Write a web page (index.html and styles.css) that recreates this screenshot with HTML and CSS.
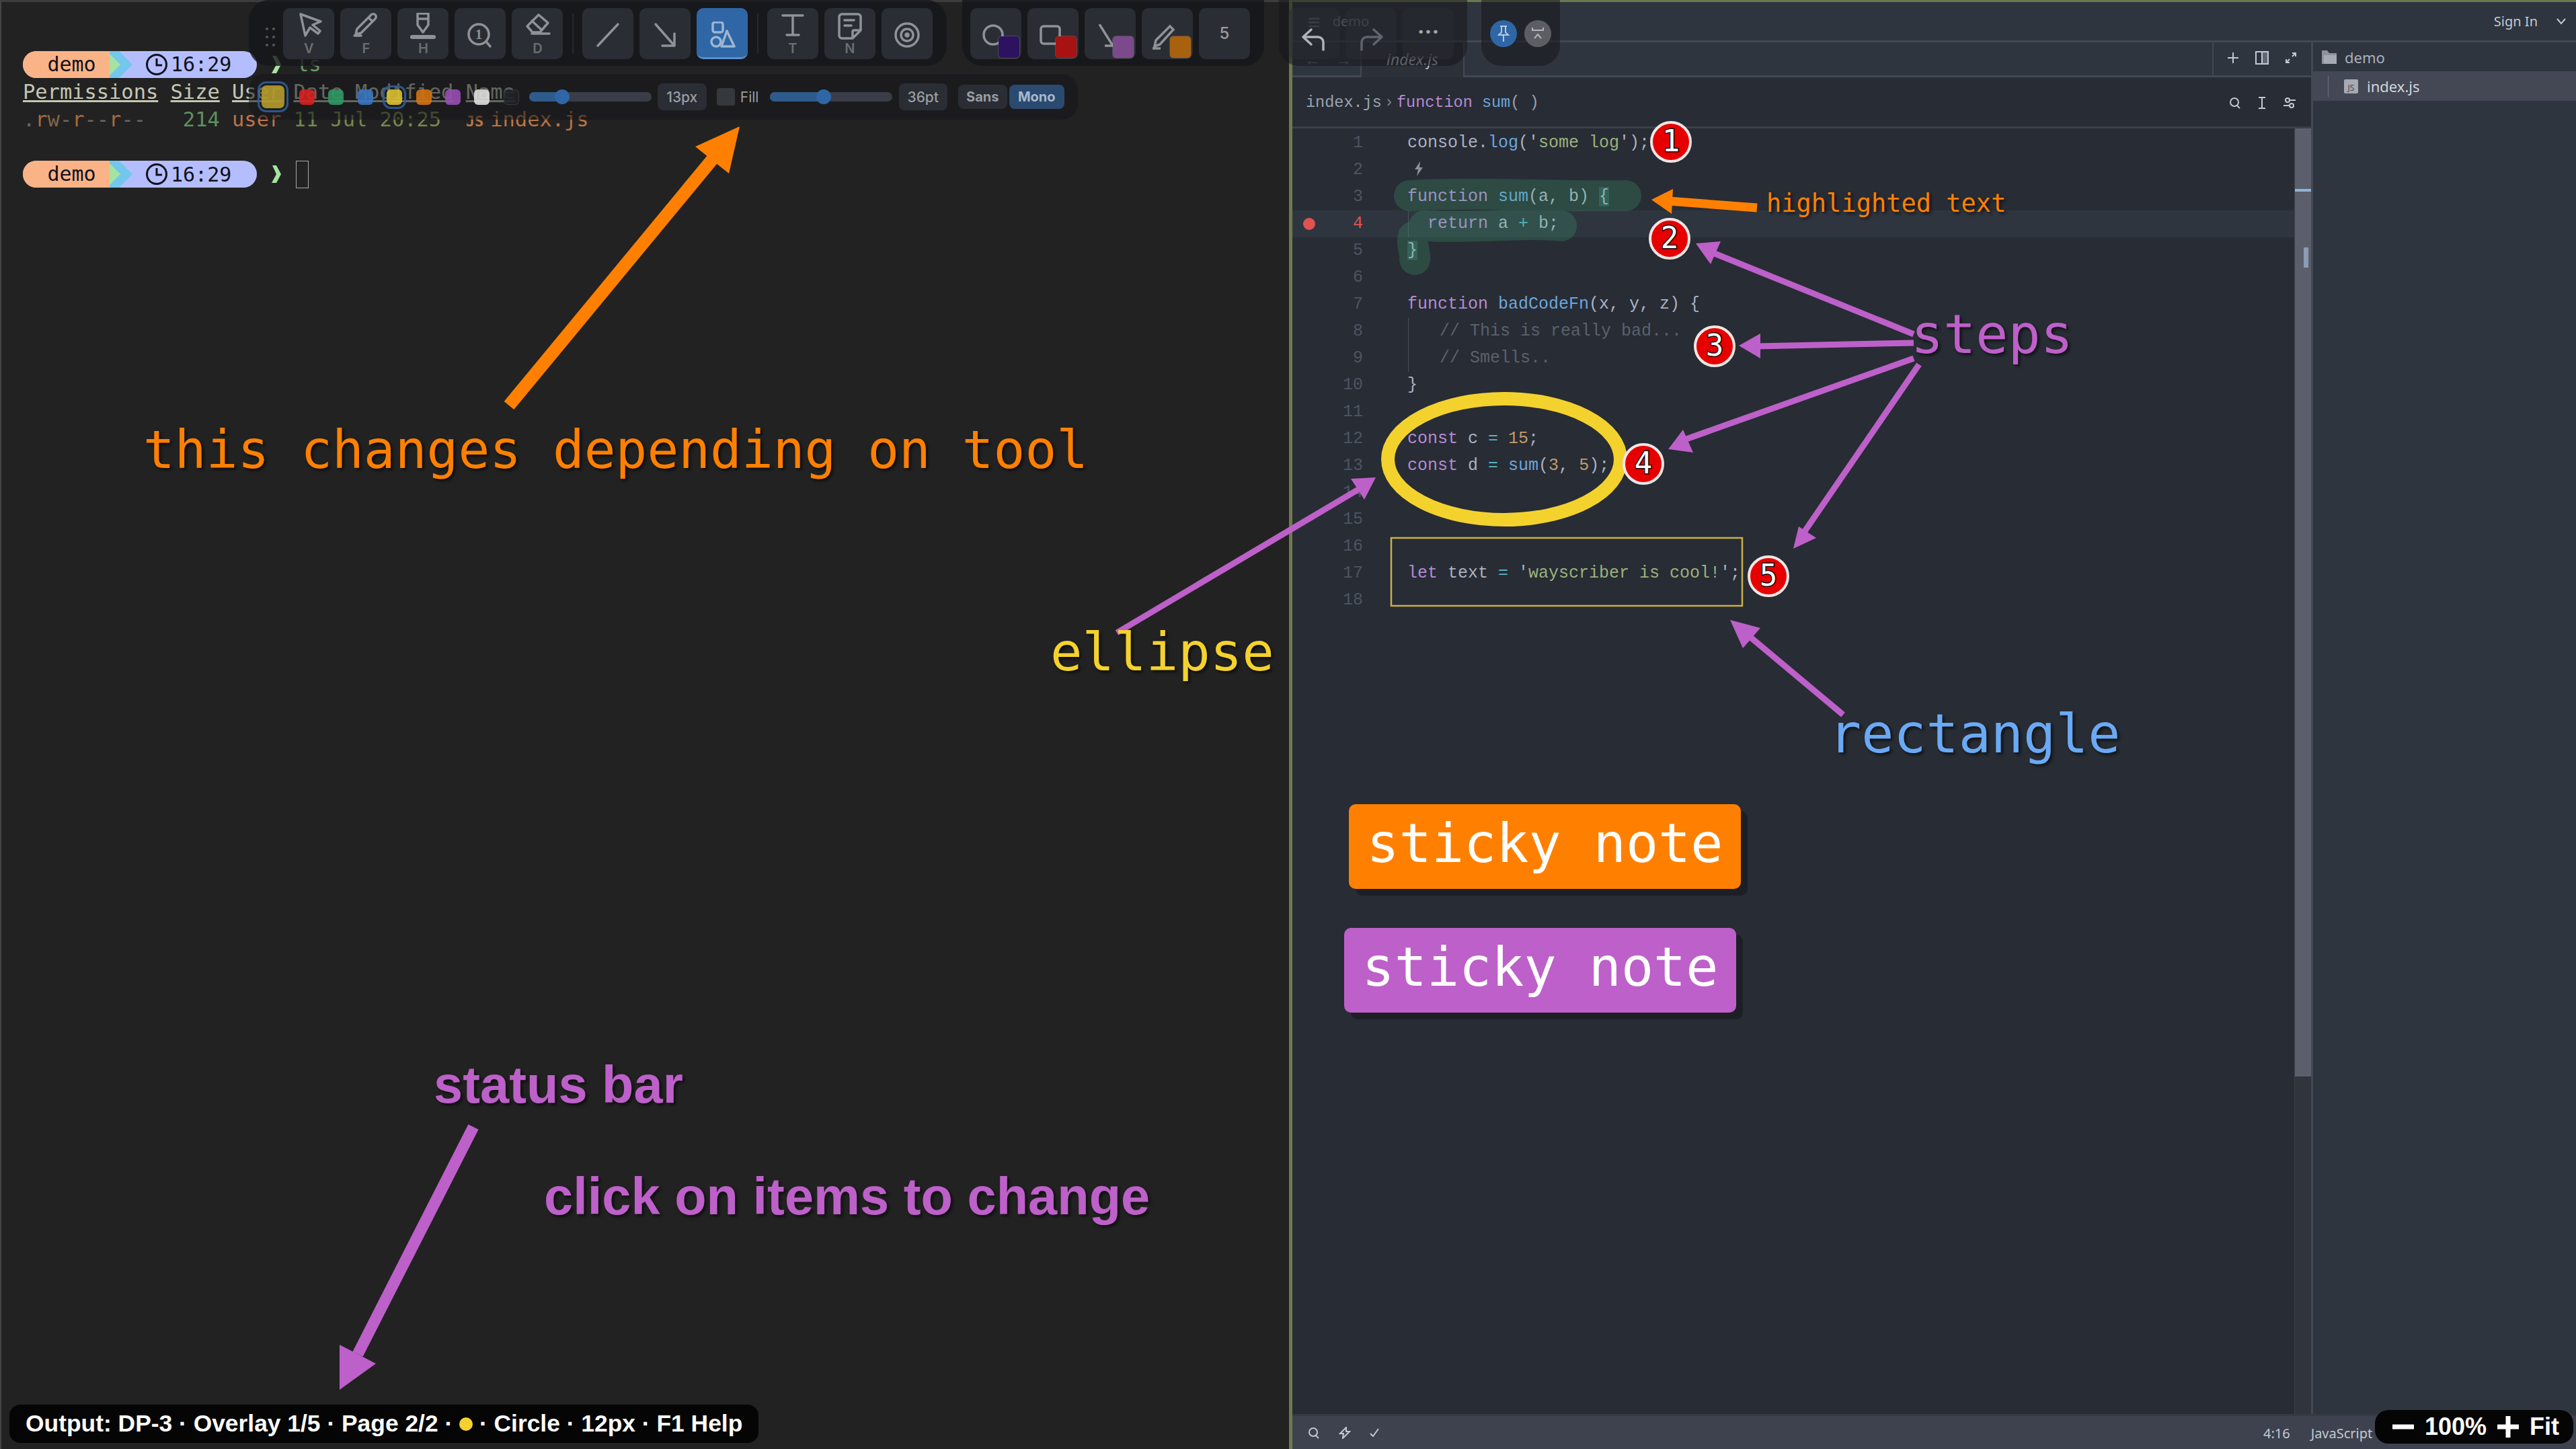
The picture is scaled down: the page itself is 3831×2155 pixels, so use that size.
FILE: index.html

```html
<!DOCTYPE html>
<html lang="en">
<head>
    <meta charset="UTF-8">
    <title>wayscriber demo</title>
    <link rel="stylesheet" href="styles.css">
</head>
<body>
    <div class="screen">
        <!-- terminal window -->
        <div class="terminal">
            <div class="term-row">
                <div class="prompt">
                    <span class="prompt-dir">demo</span>
                    <svg class="prompt-sep" width="34" height="40" viewBox="0 0 34 40"><polygon fill="#74c7ec" points="0,0 14,0 34,20 14,40 0,40"/><polygon fill="#a6e3a1" points="0,4 16,20 0,36"/></svg>
                    <span class="prompt-time"><svg width="32" height="34" viewBox="0 0 32 34" fill="none" stroke="#11111b" stroke-width="3"><circle cx="16" cy="17" r="14.5"/><path d="M16 8v10h8"/></svg>16:29</span>
                </div>
                <svg class="prompt-arrow" width="14" height="26" viewBox="0 0 14 26"><polygon fill="#a6e3a1" points="1,0 7,0 14,13 7,26 0,26 7,13"/></svg><span class="cmd">ls</span>
            </div>
            <div class="term-row term-head"><u>Permissions</u> <u>Size</u> <u>User</u> <u>Date Modified</u> <u>Name</u></div>
            <div class="term-row term-file"><span class="dim">.</span><span class="perm-r">r</span><span class="perm-w">w</span><span class="dim">-</span><span class="perm-r">r</span><span class="dim">--</span><span class="perm-r">r</span><span class="dim">--</span>   <span class="fsize">214</span> <span class="fuser">user</span> <span class="fdate">11 Jul 20:25</span>  <span class="js-glyph">JS</span><span class="fuser">index.js</span></div>
            <div class="term-row"></div>
            <div class="term-row">
                <div class="prompt">
                    <span class="prompt-dir">demo</span>
                    <svg class="prompt-sep" width="34" height="40" viewBox="0 0 34 40"><polygon fill="#74c7ec" points="0,0 14,0 34,20 14,40 0,40"/><polygon fill="#a6e3a1" points="0,4 16,20 0,36"/></svg>
                    <span class="prompt-time"><svg width="32" height="34" viewBox="0 0 32 34" fill="none" stroke="#11111b" stroke-width="3"><circle cx="16" cy="17" r="14.5"/><path d="M16 8v10h8"/></svg>16:29</span>
                </div>
                <svg class="prompt-arrow" width="14" height="26" viewBox="0 0 14 26"><polygon fill="#a6e3a1" points="1,0 7,0 14,13 7,26 0,26 7,13"/></svg><span class="term-cursor"></span>
            </div>
        </div>

        <!-- editor window -->
        <div class="editor">
            <div class="titlebar">
                <span class="menu-icon">≡</span>
                <span class="title-name">demo</span>
                <span class="sign-in">Sign In</span>
                <svg class="chev" width="14" height="10" viewBox="0 0 14 10" fill="none" stroke="#c3c9d4" stroke-width="2"><path d="M1 1l6 7 6-7"/></svg>
            </div>
            <div class="workspace">
                <div class="main-col">
                    <div class="tabs">
                        <div class="tab-nav"><span>←</span><span>→</span></div>
                        <div class="tab-active">index.js</div>
                        <div class="tab-fill"></div>
                        <div class="tab-actions">
                            <svg width="18" height="18" viewBox="0 0 18 18" stroke="#c3c9d4" stroke-width="2"><path d="M9 1v16M1 9h16"/></svg>
                            <svg width="20" height="20" viewBox="0 0 20 20" fill="none" stroke="#c3c9d4" stroke-width="2"><rect x="1" y="1" width="18" height="18"/><path d="M10 1v18"/><rect x="11" y="2" width="7" height="16" fill="#c3c9d4" stroke="none" opacity=".35"/></svg>
                            <svg width="18" height="18" viewBox="0 0 18 18" fill="none" stroke="#c3c9d4" stroke-width="2"><path d="M2 16l5-5M11 7l5-5M11 2h5v5M2 11v5h5"/></svg>
                        </div>
                    </div>
                    <div class="crumbs">
                        <span>index.js</span><span class="crumb-sep">›</span><span class="kw">function</span>&nbsp;<span class="fn">sum</span>(&nbsp;)
                        <div class="crumb-icons">
                            <svg width="18" height="18" viewBox="0 0 18 18" fill="none" stroke="#c3c9d4" stroke-width="2"><circle cx="8" cy="8" r="6"/><path d="M12 13l4 4"/></svg>
                            <svg width="14" height="18" viewBox="0 0 14 18" fill="none" stroke="#c3c9d4" stroke-width="2"><path d="M2 1h10M2 17h10M7 1v16"/></svg>
                            <svg width="20" height="18" viewBox="0 0 20 18" fill="none" stroke="#c3c9d4" stroke-width="2"><circle cx="7" cy="5" r="3"/><circle cx="13" cy="13" r="3"/><path d="M10 5h9M1 13h9"/></svg>
                        </div>
                    </div>
                    <div class="pane">
                        <div class="code">
                            <div class="line"><span class="num">1</span><span class="src">console.<span class="fn">log</span>('<span class="str">some log</span>');</span></div>
                            <div class="line"><span class="num">2</span><span class="src"><svg class="bolt" width="16" height="22" viewBox="0 0 16 22"><path fill="#8b909a" d="M10 0L2 12h5l-2 10 9-13H9z"/></svg></span></div>
                            <div class="line"><span class="num">3</span><span class="src"><span class="kw">function</span> <span class="fn">sum</span>(a, b) <span class="match">{</span></span></div>
                            <div class="line line-active"><span class="breakpoint"></span><span class="num">4</span><span class="src guide"><span class="ind2"></span><span class="kw">return</span> a <span class="op">+</span> b;</span></div>
                            <div class="line"><span class="num">5</span><span class="src"><span class="match">}</span></span></div>
                            <div class="line"><span class="num">6</span><span class="src"></span></div>
                            <div class="line"><span class="num">7</span><span class="src"><span class="kw">function</span> <span class="fn">badCodeFn</span>(x, y, z) {</span></div>
                            <div class="line"><span class="num">8</span><span class="src guide"><span class="ind3"></span><span class="comment">// This is really bad...</span></span></div>
                            <div class="line"><span class="num">9</span><span class="src guide"><span class="ind3"></span><span class="comment">// Smells..</span></span></div>
                            <div class="line"><span class="num">10</span><span class="src">}</span></div>
                            <div class="line"><span class="num">11</span><span class="src"></span></div>
                            <div class="line"><span class="num">12</span><span class="src"><span class="kw">const</span> c <span class="op">=</span> <span class="lit">15</span>;</span></div>
                            <div class="line"><span class="num">13</span><span class="src"><span class="kw">const</span> d <span class="op">=</span> <span class="fn">sum</span>(<span class="lit">3</span>, <span class="lit">5</span>);</span></div>
                            <div class="line"><span class="num">14</span><span class="src"></span></div>
                            <div class="line"><span class="num">15</span><span class="src"></span></div>
                            <div class="line"><span class="num">16</span><span class="src"></span></div>
                            <div class="line"><span class="num">17</span><span class="src"><span class="kw">let</span> text <span class="op">=</span> '<span class="str">wayscriber is cool!</span>';</span></div>
                            <div class="line"><span class="num">18</span><span class="src"></span></div>
                        </div>
                        <div class="scroll">
                            <div class="scroll-thumb"><span class="scroll-mark"></span><span class="scroll-pos"></span></div>
                        </div>
                    </div>
                </div>
                <div class="sidebar">
                    <div class="tree-root">
                        <svg width="24" height="20" viewBox="0 0 24 20"><path fill="#8d929c" d="M1 0h8l3 4h11v16H1z"/><path fill="#a5aab3" d="M4 7h19v13H4z"/></svg>
                        demo
                    </div>
                    <div class="tree-file">
                        <span class="tree-guide"></span>
                        <span class="js-icon">JS</span>
                        index.js
                    </div>
                </div>
            </div>
            <div class="statusbar">
                <svg width="18" height="18" viewBox="0 0 18 18" fill="none" stroke="#c3c9d4" stroke-width="2"><circle cx="8" cy="8" r="6"/><path d="M12 13l4 4"/></svg>
                <svg width="18" height="18" viewBox="0 0 18 18" fill="none" stroke="#c3c9d4" stroke-width="2"><path d="M11 1L2 10h5l-1 7 10-10h-5z"/></svg>
                <svg width="14" height="14" viewBox="0 0 14 14" fill="none" stroke="#c3c9d4" stroke-width="2"><path d="M1 8l4 4 8-11"/></svg>
                <span class="status-pos">4:16</span>
                <span class="status-lang">JavaScript</span>
            </div>
        </div>

        <!-- overlay: drawn shapes -->
        <svg class="canvas" width="3831" height="2155" viewBox="0 0 3831 2155">
            <g opacity=".22" fill="none" stroke="#3fb47c" stroke-linecap="round" stroke-linejoin="round" stroke-width="46">
                <path d="M2096 291C2200 285 2320 293 2418 291M2118 336C2200 340 2270 330 2322 336M2102 352C2098 365 2106 375 2104 386"/>
            </g>
            <ellipse cx="2237" cy="683" rx="173" ry="90" fill="none" stroke="#f4d22e" stroke-width="20"/>
            <rect x="2069" y="800" width="522" height="101" fill="none" stroke="#c9b04a" stroke-width="2.5"/>

            <g stroke="#ff8000" fill="#ff8000">
                <line x1="757" y1="603" x2="1066" y2="229" stroke-width="19"/>
                <polygon stroke="none" points="1100,188 1034,218 1084,258"/>
                <line x1="2613" y1="309" x2="2482" y2="299" stroke-width="13"/>
                <polygon stroke="none" points="2456,297 2488,281 2486,318"/>
            </g>
            <g stroke="#bd60c9" fill="#bd60c9">
                <line x1="2846" y1="497" x2="2545" y2="375" stroke-width="9"/>
                <polygon stroke="none" points="2522,362 2559,359 2544,393"/>
                <line x1="2846" y1="510" x2="2612" y2="515" stroke-width="9"/>
                <polygon stroke="none" points="2586,514 2618,496 2618,533"/>
                <line x1="2846" y1="533" x2="2505" y2="654" stroke-width="9"/>
                <polygon stroke="none" points="2481,668 2503,639 2518,673"/>
                <line x1="2854" y1="542" x2="2684" y2="790" stroke-width="9"/>
                <polygon stroke="none" points="2667,816 2675,783 2701,800"/>
                <line x1="2741" y1="1063" x2="2600" y2="945" stroke-width="9"/>
                <polygon stroke="none" points="2573,922 2618,934 2592,964"/>
                <line x1="1661" y1="941" x2="2025" y2="725" stroke-width="9"/>
                <polygon stroke="none" points="2046,710 2009,712 2029,743"/>
                <line x1="704" y1="1676" x2="532" y2="2014" stroke-width="17"/>
                <polygon stroke="none" points="505,2067 505,2000 559,2028"/>
            </g>
        </svg>

        <!-- overlay: labels -->
        <div class="label label-tool">this changes depending on tool</div>
        <div class="label label-high">highlighted text</div>
        <div class="label label-steps">steps</div>
        <div class="label label-ellipse">ellipse</div>
        <div class="label label-rect">rectangle</div>
        <div class="label-sans label-status">status bar</div>
        <div class="label-sans label-click">click on items to change</div>
        <div class="sticky sticky-orange">sticky note</div>
        <div class="sticky sticky-purple">sticky note</div>
        <div class="badge badge-1">1</div>
        <div class="badge badge-2">2</div>
        <div class="badge badge-3">3</div>
        <div class="badge badge-4">4</div>
        <div class="badge badge-5">5</div>

        <!-- overlay: tool palette -->
        <div class="palette">
            <div class="group group-tools">
                <div class="drag"><i></i><i></i><i></i><i></i><i></i><i></i></div>
                <div class="tool">
                    <svg class="ico" viewBox="0 0 40 40"><path d="M8 2l7 32 7-12 12 9 3-4-11-9 12-5z"/></svg><span>V</span>
                </div>
                <div class="tool">
                    <svg class="ico" viewBox="0 0 40 40"><path d="M28 3a4 4 0 0 1 6 6L13 30l-8 2 2-8zM24 7l6 6M3 34h10"/></svg><span>F</span>
                </div>
                <div class="tool">
                    <svg class="ico" viewBox="0 0 40 40"><path d="M12 1h16v17l-8 11-8-11zM12 9h16"/><path stroke-width="6" d="M4 36h32"/></svg><span>H</span>
                </div>
                <div class="tool">
                    <svg class="ico ico-step" viewBox="0 0 40 40"><circle cx="18" cy="19" r="15"/><path d="M29 30l6 7"/><text x="18" y="26" text-anchor="middle">1</text></svg>
                </div>
                <div class="tool">
                    <svg class="ico" viewBox="0 0 40 40"><path d="M22 3l14 12-12 14H13L5 20zM12 12l14 13M12 31h26"/></svg><span>D</span>
                </div>
                <div class="divider"></div>
                <div class="tool">
                    <svg class="ico ico-c" viewBox="0 0 40 40"><path d="M5 36L35 4"/></svg>
                </div>
                <div class="tool">
                    <svg class="ico ico-c" viewBox="0 0 40 40"><path d="M6 4l28 32M34 18v18H16"/></svg>
                </div>
                <div class="tool tool-on">
                    <svg class="ico ico-c" viewBox="0 0 40 40"><rect x="6" y="1" width="15" height="15" rx="3"/><circle cx="11" cy="30" r="7"/><path d="M27 14l11 23H19z"/></svg>
                </div>
                <div class="divider"></div>
                <div class="tool">
                    <svg class="ico" viewBox="0 0 40 40"><path d="M5 4h30M20 4v29M11 33h18"/></svg><span>T</span>
                </div>
                <div class="tool">
                    <svg class="ico" viewBox="0 0 40 40"><path d="M24 38H8a4 4 0 0 1-4-4V6a4 4 0 0 1 4-4h24a4 4 0 0 1 4 4v20zM24 38V28a2 2 0 0 1 2-2h10M12 11h14M12 19h10"/></svg><span>N</span>
                </div>
                <div class="tool">
                    <svg class="ico ico-c" viewBox="0 0 40 40"><circle cx="20" cy="20" r="17"/><circle cx="20" cy="20" r="9"/><circle cx="20" cy="20" r="2" fill="#8f9296"/></svg>
                </div>
            </div>
            <div class="group group-colors">
                <div class="tool tool-sw">
                    <svg class="ico-sw" viewBox="0 0 44 44"><circle cx="20" cy="16" r="14"/></svg><b class="sw sw-fill"></b>
                </div>
                <div class="tool tool-sw">
                    <svg class="ico-sw" viewBox="0 0 44 44"><rect x="6" y="3" width="28" height="26" rx="4"/></svg><b class="sw sw-rect"></b>
                </div>
                <div class="tool tool-sw">
                    <svg class="ico-sw" viewBox="0 0 44 44"><path d="M8 0l20 32M16 32h14"/></svg><b class="sw sw-arrow"></b>
                </div>
                <div class="tool tool-sw">
                    <svg class="ico-sw" viewBox="0 0 44 44"><path d="M28 3l5 5-20 22-8 3 2-9zM2 36h12"/></svg><b class="sw sw-pen"></b>
                </div>
                <div class="tool tool-num">5</div>
            </div>
            <div class="group group-history">
                <div class="tool tool-dim">
                    <svg class="ico ico-c undo" viewBox="0 0 40 40"><path d="M16 6L4 17l12 11M4 17h22a8 8 0 0 1 8 8v11"/></svg>
                </div>
                <div class="tool tool-dim">
                    <svg class="ico ico-c redo" viewBox="0 0 40 40"><path d="M24 6l12 11-12 11M36 17H14a8 8 0 0 0-8 8v11"/></svg>
                </div>
                <div class="tool tool-dim tool-more">···</div>
            </div>
            <div class="group group-pin">
                <div class="pin pin-on"><svg width="20" height="26" viewBox="0 0 20 26" fill="none" stroke="#b9c9e0" stroke-width="2"><path d="M5 2h10M7 2v9l-4 4h14l-4-4V2M10 15v10"/></svg></div>
                <div class="pin"><svg width="18" height="22" viewBox="0 0 18 22" fill="none" stroke="#b5b6ba" stroke-width="2"><path d="M1 2v4h16V2M4 18l5-6 5 6"/></svg></div>
            </div>
        </div>
        <div class="options">
            <b class="color color-big color-on c-yellow-dim"></b>
            <b class="color c-red"></b>
            <b class="color c-green"></b>
            <b class="color c-blue"></b>
            <b class="color color-on c-yellow"></b>
            <b class="color c-orange"></b>
            <b class="color c-purple"></b>
            <b class="color c-white"></b>
            <b class="color c-black"></b>
            <div class="slider slider-a"><div class="slider-fill" style="width: 27%"></div></div>
            <div class="opt-btn opt-size">13px</div>
            <div class="check"></div>
            <span class="check-label">Fill</span>
            <div class="slider slider-b"><div class="slider-fill" style="width: 44%"></div></div>
            <div class="opt-btn opt-pt">36pt</div>
            <div class="opt-btn opt-font opt-sans">Sans</div>
            <div class="opt-btn opt-font opt-mono">Mono</div>
        </div>

        <!-- overlay: status pills -->
        <div class="status-pill">Output: DP-3 · Overlay 1/5 · Page 2/2 · <span class="status-dot"></span> · Circle · 12px · F1 Help</div>
        <div class="zoom-pill">
            <svg width="32" height="32" viewBox="0 0 32 32" stroke="#fff" stroke-width="7"><path d="M0 16h32"/></svg>
            <span>100%</span>
            <svg width="32" height="32" viewBox="0 0 32 32" stroke="#fff" stroke-width="7"><path d="M0 16h32M16 0v32"/></svg>
            <span>Fit</span>
        </div>
    </div>
</body>
</html>
```

FILE: styles.css

```css
html, body {
    margin: 0;
    padding: 0;
    background: #222;
}
.screen {
    position: relative;
    display: flex;
    width: 3831px;
    height: 2155px;
    overflow: hidden;
}

/* terminal */
.terminal {
    width: 1917px;
    box-sizing: border-box;
    padding: 72px 0 0 32px;
    background: #222;
    border-top: 3px solid #3d3d3d;
    border-left: 2px solid #444;
    font-family: "DejaVu Sans Mono", monospace;
    font-size: 30.4px;
    color: #bbb;
}
.term-row {
    display: flex;
    align-items: center;
    height: 41px;
    white-space: pre;
}
.term-row:nth-child(5) {
    height: 40px;
}
.term-head {
    color: #c5c7b5;
}
.term-head, .term-file {
    display: block;
    line-height: 41px;
}
.term-file {
    color: #8a8a8a;
}
.dim { color: #6a6862; }
.perm-r { color: #a86a3e; }
.perm-w { color: #82664a; }
.fsize { color: #5f9060; }
.fuser { color: #bd7347; }
.fdate { color: #76864e; }
.js-glyph {
    display: inline-block;
    width: 36.6px;
    color: #bd7347;
    font-size: 22px;
    font-weight: bold;
}
.prompt {
    display: flex;
    align-items: center;
    width: 348px;
    height: 40px;
    border-radius: 20px;
    overflow: hidden;
    background: #b4befe;
    color: #11111b;
    font-size: 30px;
}
.prompt-dir {
    width: 129px;
    height: 40px;
    line-height: 40px;
    text-align: center;
    background: #fab387;
    padding-left: 16px;
    box-sizing: border-box;
}
.prompt-sep {
    flex: none;
}
.prompt-time {
    display: flex;
    align-items: center;
    gap: 5px;
    margin-left: 20px;
}
.prompt-arrow {
    margin-left: 22px;
    flex: none;
}
.cmd {
    margin-left: 23px;
    color: #6a9a6c;
}
.term-cursor {
    width: 17px;
    height: 39px;
    margin-left: 22px;
    border: 1px solid #aaa;
}

/* editor */
.editor {
    flex: 1;
    display: flex;
    flex-direction: column;
    box-sizing: border-box;
    border-top: 3px solid #6e7850;
    border-left: 5px solid #6e7850;
    background: #2f353f;
    font-family: "Noto Sans", sans-serif;
    color: #c3c9d4;
}
.titlebar {
    display: flex;
    align-items: center;
    flex: none;
    box-sizing: border-box;
    height: 60px;
    border-bottom: 3px solid #434854;
    font-size: 20px;
}
.menu-icon {
    margin-left: 23px;
    font-size: 32px;
    color: #8b909a;
}
.title-name {
    margin-left: 18px;
    color: #9a9fa9;
}
.sign-in {
    margin-left: auto;
}
.chev {
    margin: 0 15px 0 28px;
}
.workspace {
    flex: 1;
    display: flex;
    min-height: 0;
}
.main-col {
    flex: 1;
    display: flex;
    flex-direction: column;
    min-width: 0;
}
.tabs {
    display: flex;
    height: 52px;
    flex: none;
}
.tab-nav {
    display: flex;
    gap: 22px;
    width: 103px;
    box-sizing: border-box;
    padding: 8px 0 0 18px;
    border-bottom: 3px solid #434854;
    border-right: 2px solid #434854;
    color: #6a7080;
    font-size: 24px;
}
.tab-active {
    width: 151px;
    text-align: center;
    line-height: 50px;
    font-size: 23px;
    font-style: italic;
    color: #b5bbc7;
    background: #2b3039;
}
.tab-fill {
    flex: 1;
    border-left: 2px solid #434854;
    border-bottom: 3px solid #434854;
}
.tab-actions {
    display: flex;
    align-items: center;
    gap: 24px;
    width: 147px;
    box-sizing: border-box;
    padding: 0 0 4px 20px;
    border-left: 2px solid #434854;
    border-bottom: 3px solid #434854;
}
.crumbs {
    display: flex;
    align-items: center;
    flex: none;
    height: 76px;
    box-sizing: border-box;
    padding: 2px 0 0 20px;
    background: #282c34;
    border-bottom: 3px solid #3a3f4a;
    font-family: "Liberation Mono", monospace;
    font-size: 23.5px;
    color: #9aa2b1;
}
.crumb-sep {
    margin: 0 4px;
    color: #7a8190;
}
.crumb-icons {
    display: flex;
    align-items: center;
    gap: 24px;
    margin-left: auto;
    padding-right: 22px;
}
.pane {
    flex: 1;
    display: flex;
    min-height: 0;
    background: #282c34;
}
.code {
    flex: 1;
    padding-top: 2px;
    font-family: "Liberation Mono", monospace;
    font-size: 25px;
    color: #a9b2c3;
}
.line {
    position: relative;
    display: flex;
    height: 40px;
    line-height: 40px;
    white-space: pre;
}
.line-active {
    background: #2f353f;
}
.num {
    width: 105px;
    text-align: right;
    color: #4d5462;
    flex: none;
}
.line-active .num {
    color: #e05252;
}
.src {
    margin-left: 66px;
    flex: 1;
}
.guide {
    background: linear-gradient(#4a505c, #4a505c) 1px 0 / 1px 100% no-repeat;
}
.ind2 { padding-left: 30px; }
.ind3 { padding-left: 48px; }
.breakpoint {
    position: absolute;
    left: 16px;
    top: 11px;
    width: 18px;
    height: 18px;
    border-radius: 50%;
    background: #e05252;
}
.bolt {
    margin-left: 9px;
    vertical-align: -3px;
}
.kw { color: #b48ad4; }
.fn { color: #6ba6dd; }
.str { color: #9ab27e; }
.lit { color: #c09a6b; }
.op { color: #56b6c2; }
.comment { color: #5a616e; }
.match { background: rgba(70, 150, 160, .3); color: #a9b2c3; }
.scroll {
    width: 25px;
    flex: none;
    background: #30343c;
    border-left: 1px solid #3a3f4a;
    box-sizing: border-box;
}
.scroll-thumb {
    position: relative;
    height: 1410px;
    background: #5a5f6b;
}
.scroll-mark {
    position: absolute;
    left: 0;
    right: 0;
    top: 90px;
    height: 4px;
    background: #8db4dc;
}
.scroll-pos {
    position: absolute;
    left: 13px;
    width: 7px;
    top: 177px;
    height: 30px;
    background: #8b9db5;
}
.sidebar {
    width: 394px;
    flex: none;
    border-left: 3px solid #434854;
    box-sizing: border-box;
    font-size: 22px;
}
.tree-root {
    display: flex;
    align-items: center;
    gap: 11px;
    height: 43px;
    padding-left: 12px;
    color: #a9afba;
}
.tree-file {
    position: relative;
    display: flex;
    align-items: center;
    gap: 13px;
    height: 44px;
    padding-left: 46px;
    background: #434854;
    color: #d0d5de;
}
.tree-guide {
    position: absolute;
    left: 22px;
    top: 7px;
    bottom: 6px;
    width: 1px;
    background: #6a7080;
}
.js-icon {
    width: 21px;
    height: 21px;
    border-radius: 2px;
    background: #a5aab3;
    color: #434854;
    font-size: 12px;
    line-height: 26px;
    text-align: center;
}
.statusbar {
    display: flex;
    align-items: center;
    flex: none;
    gap: 28px;
    height: 52px;
    box-sizing: border-box;
    padding: 1px 0 0 23px;
    background: #3d424e;
    border-top: 3px solid #363a44;
    font-size: 20px;
}
.status-pos {
    margin-left: 1287px;
}
.status-lang {
    margin-left: 3px;
}

/* annotations */
.canvas {
    position: absolute;
    left: 0;
    top: 0;
}
.label {
    position: absolute;
    font-family: "DejaVu Sans Mono", monospace;
    font-size: 80px;
    line-height: 90px;
    white-space: pre;
    text-shadow: 3px 3px 4px rgba(0, 0, 0, .6);
}
.label-sans {
    position: absolute;
    font-family: "Liberation Sans", sans-serif;
    font-weight: bold;
    font-size: 77.6px;
    line-height: 90px;
    color: #bd60c9;
    white-space: pre;
    text-shadow: 3px 3px 4px rgba(0, 0, 0, .6);
}
.label-tool { left: 213px; top: 624px; color: #ff8000; font-size: 77.8px; }
.label-high { left: 2627px; top: 282px; font-size: 37px; line-height: 42px; color: #ff8000; }
.label-steps { left: 2842px; top: 453px; color: #bd60c9; }
.label-ellipse { left: 1562px; top: 925px; color: #f4d22e; font-size: 79px; }
.label-rect { left: 2720px; top: 1047px; color: #6aa9f4; }
.label-status { left: 645px; top: 1568px; }
.label-click { left: 809px; top: 1734px; }
.sticky {
    position: absolute;
    width: 583px;
    height: 126px;
    line-height: 118px;
    text-align: center;
    border-radius: 10px;
    color: #fff;
    font-family: "DejaVu Sans Mono", monospace;
    font-size: 80px;
    box-shadow: 10px 10px 0 rgba(20, 22, 28, .55);
}
.sticky-orange { left: 2006px; top: 1196px; background: #ff8000; }
.sticky-purple { left: 1999px; top: 1380px; background: #bd60c9; }
.badge {
    position: absolute;
    width: 62px;
    height: 62px;
    box-sizing: border-box;
    border: 4px solid #efe6e6;
    border-radius: 50%;
    background: #e60000;
    color: #fff;
    font-family: "DejaVu Sans Mono", monospace;
    font-size: 44px;
    line-height: 52px;
    text-align: center;
    -webkit-text-stroke: 3px #111;
    paint-order: stroke fill;
}
.badge-1 { left: 2454px; top: 180px; }
.badge-2 { left: 2452px; top: 324px; }
.badge-3 { left: 2519px; top: 484px; }
.badge-4 { left: 2413px; top: 659px; }
.badge-5 { left: 2599px; top: 826px; }

/* tool palette */
.palette {
    position: absolute;
    left: 370px;
    top: 0;
    display: flex;
    font-family: "Inter", sans-serif;
}
.group {
    display: flex;
    gap: 9px;
    height: 98px;
    box-sizing: border-box;
    padding-top: 12px;
    border-radius: 0 0 30px 30px;
    background: rgba(21, 22, 26, .8);
}
.group-tools {
    width: 1038px;
    padding-left: 51.4px;
    border-radius: 30px;
}
.group-colors {
    width: 449px;
    margin-left: 23px;
    padding-left: 12px;
}
.group-history {
    width: 280px;
    margin-left: 22px;
    padding-left: 14px;
    background: rgba(21, 22, 26, .55);
}
.group-pin {
    width: 117px;
    margin-left: 21px;
    padding: 30px 0 0 13px;
    gap: 11px;
    background: rgba(21, 22, 26, .55);
}
.drag {
    position: absolute;
    left: 25px;
    top: 41px;
    display: grid;
    grid-template-columns: 4px 4px;
    gap: 8px 6px;
}
.drag i {
    width: 4px;
    height: 4px;
    background: #55585e;
    border-radius: 50%;
}
.tool {
    position: relative;
    display: flex;
    flex-direction: column;
    align-items: center;
    width: 76px;
    height: 76px;
    flex: none;
    box-sizing: border-box;
    padding-top: 7px;
    border-radius: 10px;
    background: #2a2d33;
    color: #6a6d73;
    font-size: 20px;
    font-weight: 600;
    line-height: 26px;
}
.tool-on {
    background: #2f66a6;
    border-bottom: 3px solid #5a90cc;
}
.tool-dim {
    background: rgba(42, 45, 51, .5);
}
.tool-more {
    font-size: 34px;
    line-height: 56px;
    color: #a5a8ad;
}
.tool-num {
    justify-content: center;
    padding: 0;
    color: #9a9da3;
    font-size: 24px;
    font-weight: 500;
}
.divider {
    width: 2px;
    height: 60px;
    margin: 8px 4.4px 0;
    background: #26282d;
}
.ico {
    width: 40px;
    height: 40px;
    fill: none;
    stroke: #8f9296;
    stroke-width: 3.5;
    stroke-linecap: round;
    stroke-linejoin: round;
}
.ico text {
    fill: #8f9296;
    stroke: none;
    font: bold 20px "Liberation Serif", serif;
}
.ico-c, .ico-step {
    margin-top: 13px;
}
.tool-on .ico {
    stroke: #9db5d2;
}
.undo {
    stroke: #b0b3b8;
    margin-top: 19px;
}
.redo {
    stroke: #5f646c;
    margin-top: 19px;
}
.ico-sw {
    position: absolute;
    left: 14px;
    top: 24px;
    width: 44px;
    height: 44px;
    fill: none;
    stroke: #8f9296;
    stroke-width: 3.5;
}
.sw {
    position: absolute;
    left: 42px;
    top: 42px;
    width: 31px;
    height: 32px;
    border-radius: 5px;
    box-shadow: 0 0 0 1px rgba(255, 255, 255, .15);
}
.sw-fill { background: #2d1260; }
.sw-rect { background: #a81212; }
.sw-arrow { background: #7c4a8c; }
.sw-pen { background: #a8610f; }
.pin {
    display: flex;
    align-items: center;
    justify-content: center;
    width: 40px;
    height: 40px;
    border-radius: 50%;
    background: #5d5e64;
}
.pin-on {
    background: #2f66a6;
}

/* second palette row */
.options {
    position: absolute;
    left: 370px;
    top: 110px;
    display: flex;
    align-items: center;
    width: 1233px;
    height: 68px;
    box-sizing: border-box;
    padding-left: 19px;
    border-radius: 24px;
    background: rgba(21, 22, 26, .55);
    font-family: "Inter", sans-serif;
    color: #9a9da3;
    font-size: 21px;
}
.color {
    width: 23px;
    height: 23px;
    margin-right: 20.4px;
    flex: none;
    border-radius: 6px;
    opacity: .88;
}
.color-big {
    width: 34px;
    height: 34px;
    margin-right: 22px;
    border-radius: 7px;
}
.color-on {
    outline: 3px solid #2f5f98;
    outline-offset: 3px;
}
.c-yellow-dim { background: #b8a02c; }
.c-red { background: #dc2020; }
.c-green { background: #2f9a66; }
.c-blue { background: #3a78c4; }
.c-yellow { background: #e0c430; }
.c-orange { background: #d8740f; }
.c-purple { background: #9a50b6; }
.c-white { background: #e4e4e4; }
.c-black {
    margin-right: 15px;
    background: #202226;
    box-shadow: inset 0 0 0 1px #3c3e44;
}
.slider {
    position: relative;
    width: 182px;
    height: 14px;
    flex: none;
    border-radius: 7px;
    background: #3a3d48;
}
.slider-fill {
    position: relative;
    height: 14px;
    border-radius: 7px;
    background: #2f5a8c;
}
.slider-fill::after {
    content: "";
    position: absolute;
    right: -11px;
    top: -4px;
    width: 22px;
    height: 22px;
    border-radius: 50%;
    background: #2f66a6;
}
.slider-a { margin-left: 0; }
.opt-btn {
    display: flex;
    align-items: center;
    justify-content: center;
    height: 40px;
    flex: none;
    border-radius: 8px;
    background: #2a2d33;
    font-weight: 500;
    font-size: 21px;
}
.opt-size {
    width: 73px;
    margin-left: 9px;
}
.check {
    width: 27px;
    height: 26px;
    margin-left: 15px;
    border-radius: 4px;
    background: #36383c;
}
.check-label {
    margin-left: 8px;
    width: 29px;
}
.slider-b {
    margin-left: 15px;
}
.opt-pt {
    width: 72px;
    margin-left: 10px;
}
.opt-font {
    height: 36px;
    font-weight: 700;
    font-size: 20px;
}
.opt-sans {
    width: 73px;
    margin-left: 16px;
}
.opt-mono {
    width: 82px;
    margin-left: 3px;
    background: #2a4a70;
    color: #a8b8cc;
}

/* bottom pills */
.status-pill {
    position: absolute;
    left: 14px;
    top: 2089px;
    display: flex;
    align-items: center;
    height: 57px;
    box-sizing: border-box;
    padding: 0 24px;
    white-space: pre;
    border-radius: 16px;
    background: #050505;
    color: #fff;
    font-family: "Liberation Sans", sans-serif;
    font-weight: bold;
    font-size: 35.4px;
}
.status-dot {
    width: 20px;
    height: 20px;
    border-radius: 50%;
    background: #f4d22e;
}
.zoom-pill {
    position: absolute;
    left: 3532px;
    top: 2097px;
    display: flex;
    align-items: center;
    gap: 16px;
    width: 295px;
    height: 50px;
    box-sizing: border-box;
    padding-left: 26px;
    border-radius: 20px;
    background: #050505;
    color: #fff;
    font-family: "Liberation Sans", sans-serif;
    font-weight: bold;
    font-size: 36px;
}
```
